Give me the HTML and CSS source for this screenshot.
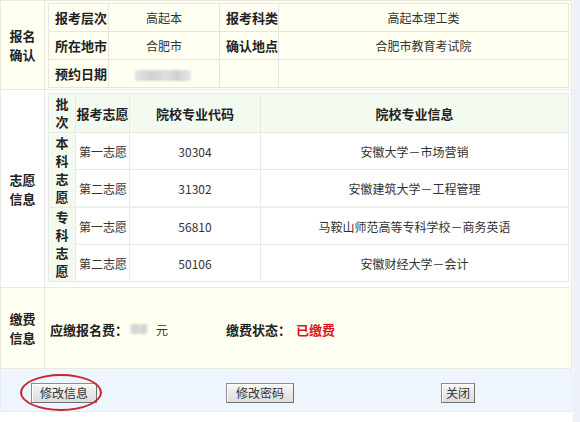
FILE: index.html
```html
<!DOCTYPE html>
<html lang="zh">
<head>
<meta charset="utf-8">
<link rel="stylesheet" href="styles.css">
</head>
<body>
<div class="page">
<table class="main">
  <tr class="sec-confirm">
    <td class="label cream">报名<br>确认</td>
    <td class="content cream">
      <table class="info">
        <tr>
          <th class="c1">报考层次</th>
          <td class="c2">高起本</td>
          <th class="c3">报考科类</th>
          <td class="c4">高起本理工类</td>
        </tr>
        <tr>
          <th>所在地市</th>
          <td>合肥市</td>
          <th>确认地点</th>
          <td>合肥市教育考试院</td>
        </tr>
        <tr>
          <th>预约日期</th>
          <td class="left"><span class="blur blur-date"></span></td>
          <th></th>
          <td></td>
        </tr>
      </table>
    </td>
  </tr>
  <tr class="sec-wish">
    <td class="label white">志愿<br>信息</td>
    <td class="content white">
      <table class="wish">
        <tr class="head">
          <th class="batch">批<br>次</th>
          <th class="w-choice">报考志愿</th>
          <th class="w-code">院校专业代码</th>
          <th class="w-info">院校专业信息</th>
        </tr>
        <tr>
          <th class="batch" rowspan="2">本<br>科<br>志<br>愿</th>
          <td class="choice">第一志愿</td>
          <td>30304</td>
          <td>安徽大学－市场营销</td>
        </tr>
        <tr class="group-end">
          <td class="choice">第二志愿</td>
          <td>31302</td>
          <td>安徽建筑大学－工程管理</td>
        </tr>
        <tr>
          <th class="batch" rowspan="2">专<br>科<br>志<br>愿</th>
          <td class="choice">第一志愿</td>
          <td>56810</td>
          <td>马鞍山师范高等专科学校－商务英语</td>
        </tr>
        <tr>
          <td class="choice">第二志愿</td>
          <td>50106</td>
          <td>安徽财经大学－会计</td>
        </tr>
      </table>
    </td>
  </tr>
  <tr class="sec-fee">
    <td class="label cream">缴费<br>信息</td>
    <td class="content cream">
      <div class="fee">
        <span class="fee-item"><b>应缴报名费：</b><span class="blur blur-fee"></span>元</span>
        <span class="fee-item status"><b>缴费状态：</b><b class="paid">已缴费</b></span>
      </div>
    </td>
  </tr>
  <tr class="sec-actions">
    <td colspan="2" class="actions">
      <div class="btns">
        <span class="btn-wrap">
          <button class="btn b1">修改信息</button>
          <span class="ring"></span>
        </span>
        <button class="btn b2">修改密码</button>
        <button class="btn b3">关闭</button>
      </div>
    </td>
  </tr>
</table>
</div>
</body>
</html>
```

FILE: styles.css
```css
html, body {
  margin: 0;
  padding: 0;
}
body {
  background: #fff;
  font-family: "Noto Sans CJK SC", "Liberation Sans", sans-serif;
  font-size: 12px;
  color: #333;
  width: 580px;
  height: 422px;
  overflow: hidden;
}
.page {
  width: 572px;
  border-right: 1px solid #dfe3e8;
  background: #fff;
  position: relative;
}
.page::after {
  content: "";
  position: absolute;
  top: 0;
  right: -8px;
  width: 7px;
  height: 422px;
  background: #edf2f8;
  border-left: 1px solid #f6f8fb;
}
table {
  border-collapse: collapse;
}
.main {
  width: 572px;
  table-layout: fixed;
}
.main > tbody > tr > td {
  border: 1px solid #e9e9e2;
  padding: 0;
}
.label {
  width: 43px;
  text-align: center;
  font-weight: bold;
  font-size: 13px;
  line-height: 19px;
  color: #222;
}
.cream { background: #fffff2; }
.white { background: #fff; }

.content { vertical-align: top; }
.sec-confirm > .content { padding: 2px 2px 1px 3px !important; }
.sec-wish > .content { padding: 3px 2px 5px 3px !important; }

/* confirm table */
.info {
  width: 100%;
  table-layout: fixed;
}
.info th, .info td {
  border: 1px solid #e6e6de;
  height: 27px;
  padding: 0;
  text-align: center;
  font-weight: normal;
}
.info th {
  font-weight: bold;
  color: #222;
  font-size: 13px;
  text-align: left;
  padding-left: 6px;
}
.info .c1 { width: 53px; }
.info .c2 { width: 110px; }
.info .c3 { width: 52px; }
.info td.left { text-align: left; padding-left: 26px; }
.blur {
  display: inline-block;
  background: linear-gradient(90deg, #e4e4e4, #d2d2d2 30%, #e0e0e0 55%, #cfcfcf 75%, #e8e8e8);
  border-radius: 2px;
  vertical-align: middle;
}
.blur-date { width: 56px; height: 11px; filter: blur(1px); }
.blur-fee { width: 18px; height: 10px; margin: 0 8px 0 2px; filter: blur(1px); }

/* wish table */
.wish {
  width: 100%;
  table-layout: fixed;
}
.wish th, .wish td {
  border: 1px solid #e6ebe4;
  padding: 0;
  text-align: center;
  white-space: nowrap;
}
.wish th {
  font-weight: bold;
  color: #222;
  font-size: 13px;
}
.wish .head th {
  background: #f3fbf0;
  height: 38px;
}
.wish th.batch {
  background: #f3fbf0;
  width: 26px;
  line-height: 18px;
  white-space: normal;
}
.wish .w-choice { width: 53px; }
.wish .w-code { width: 130px; }
.wish td {
  height: 36px;
  background: #fff;
}
.wish td.choice {
  text-align: left;
  padding-left: 3px;
}
.wish tr.group-end > td { border-bottom: 2px solid #ecefea; }

/* fee */
.sec-fee > td { height: 80px; }
.sec-fee > .content { vertical-align: middle; }
.fee {
  display: flex;
  align-items: center;
  padding-left: 5px;
  padding-top: 2px;
}
.fee b {
  color: #222;
  font-size: 13px;
}
.fee-item { display: inline-flex; align-items: center; }
.fee .status { margin-left: 58px; }
.fee .paid { color: #d8141a; margin-left: 5px; }

/* actions */
.actions {
  background: #eef5fc;
  height: 42px;
}
.sec-actions > td { border-color: #e6ecf2 !important; }
.btns {
  display: flex;
  align-items: center;
  padding-left: 30px;
  padding-top: 5px;
}
.btn {
  font-family: "Noto Sans CJK SC", "Liberation Sans", sans-serif;
  font-size: 12px;
  color: #333;
  height: 20px;
  padding: 0;
  line-height: 16px;
  border: 1px solid #8e8e8e;
  border-right-color: #6f6f6f;
  border-bottom-color: #6f6f6f;
  background: linear-gradient(#f6f6f6, #dcdcdc);
  box-shadow: inset 1px 1px 0 #fff;
}
.b1 { width: 66px; }
.b2 { width: 68px; margin-left: 129px; }
.b3 { width: 34px; margin-left: 147px; }
.btn-wrap {
  position: relative;
  display: inline-flex;
}
.ring {
  position: absolute;
  left: -11px;
  top: -9px;
  width: 78px;
  height: 33px;
  border: 2px solid #c8262c;
  border-radius: 50%;
  pointer-events: none;
}
```
